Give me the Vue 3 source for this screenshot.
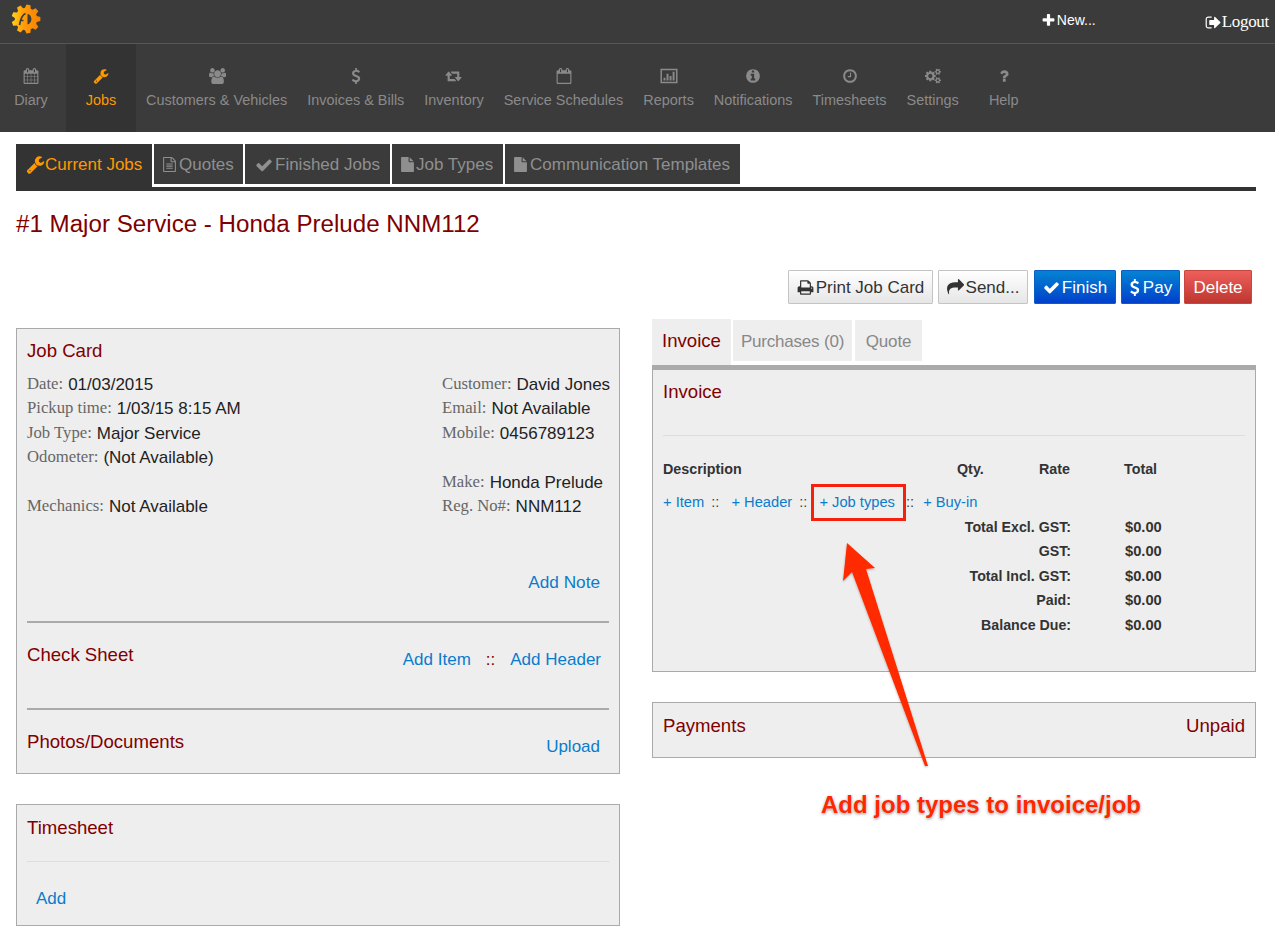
<script setup>
const icons = {
  calendar: 'M192 1664h288v-288h-288v288zm352 0h320v-288h-320v288zm-352-352h288v-320h-288v320zm352 0h320v-320h-320v320zm-352-384h288v-288h-288v288zm736 736h320v-288h-320v288zm-384-736h320v-288h-320v288zm768 736h288v-288h-288v288zm-384-352h320v-320h-320v320zm-352-864v-288q0-13-9.5-22.5t-22.5-9.5h-64q-13 0-22.5 9.5t-9.5 22.5v288q0 13 9.5 22.5t22.5 9.5h64q13 0 22.5-9.5t9.5-22.5zm736 864h288v-320h-288v320zm-384-384h320v-288h-320v288zm384 0h288v-288h-288v288zm32-480v-288q0-13-9.5-22.5t-22.5-9.5h-64q-13 0-22.5 9.5t-9.5 22.5v288q0 13 9.5 22.5t22.5 9.5h64q13 0 22.5-9.5t9.5-22.5zm384-64v1280q0 52-38 90t-90 38h-1408q-52 0-90-38t-38-90v-1280q0-52 38-90t90-38h128v-96q0-66 47-113t113-47h64q66 0 113 47t47 113v96h384v-96q0-66 47-113t113-47h64q66 0 113 47t47 113v96h128q52 0 90 38t38 90z',
  calendarO: 'M192 1664h1408v-1024h-1408v1024zm384-1216v-288q0-14-9-23t-23-9h-64q-14 0-23 9t-9 23v288q0 14 9 23t23 9h64q14 0 23-9t9-23zm768 0v-288q0-14-9-23t-23-9h-64q-14 0-23 9t-9 23v288q0 14 9 23t23 9h64q14 0 23-9t9-23zm384-64v1280q0 52-38 90t-90 38h-1408q-52 0-90-38t-38-90v-1280q0-52 38-90t90-38h128v-96q0-66 47-113t113-47h64q66 0 113 47t47 113v96h384v-96q0-66 47-113t113-47h64q66 0 113 47t47 113v96h128q52 0 90 38t38 90z',
  wrench: 'M448 1472q0-26-19-45t-45-19-45 19-19 45 19 45 45 19 45-19 19-45zm644-420l-682 682q-37 37-90 37-52 0-91-37l-106-108q-38-36-38-90 0-53 38-91l681-681q39 98 114.5 173.5t173.5 114.5zm634-435q0 39-23 106-47 134-164.5 217.5t-258.5 83.5q-185 0-316.5-131.5t-131.5-316.5 131.5-316.5 316.5-131.5q58 0 121.5 16.5t107.5 46.5q16 11 16 28t-16 28l-293 169v224l193 107q5-3 79-48.5t135.5-81 70.5-35.5q15 0 23.5 10t8.5 25z',
  users: 'M593 896q-162 5-265 128h-134q-82 0-138-40.5t-56-118.5q0-353 124-353 6 0 43.5 21t97.5 42.5 119 21.5q67 0 133-23-5 37-5 66 0 139 81 256zm1071 637q0 120-73 189.5t-194 69.5h-874q-121 0-194-69.5t-73-189.5q0-53 3.5-103.5t14-109 26.5-108.5 43-97.5 62-81 85.5-53.5 111.5-20q10 0 43 21.5t73 48 107 48 135 21.5 135-21.5 107-48 73-48 43-21.5q61 0 111.5 20t85.5 53.5 62 81 43 97.5 26.5 108.5 14 109 3.5 103.5zm-1024-1277q0 106-75 181t-181 75-181-75-75-181 75-181 181-75 181 75 75 181zm704 384q0 159-112.5 271.5t-271.5 112.5-271.5-112.5-112.5-271.5 112.5-271.5 271.5-112.5 271.5 112.5 112.5 271.5zm576 225q0 78-56 118.5t-138 40.5h-134q-103-123-265-128 81-117 81-256 0-29-5-66 66 23 133 23 59 0 119-21.5t97.5-42.5 43.5-21q124 0 124 353zm-128-609q0 106-75 181t-181 75-181-75-75-181 75-181 181-75 181 75 75 181z',
  dollar: 'M1362 1185q0 153-99.5 263.5t-258.5 136.5v175q0 14-9 23t-23 9h-135q-13 0-22.5-9.5t-9.5-22.5v-175q-66-9-127.5-31t-101.5-44.5-74-48-46.5-37.5-17.5-18q-17-21-2-41l103-135q7-10 23-12 15-2 24 9l2 2q113 99 243 125 37 8 74 8 81 0 142.5-43t61.5-122q0-28-15-53t-33.5-42-58.5-37.5-66-32-80-32.5q-39-16-61.5-25t-61.5-26.5-62.5-31-56.5-35.5-53.5-42.5-43.5-49-35.5-58-21-66.5-8.5-78q0-138 98-242t255-134v-180q0-13 9.5-22.5t22.5-9.5h135q14 0 23 9t9 23v176q57 6 110.5 23t87 33.5 63.5 37.5 39 29 15 14q17 18 5 38l-81 146q-8 15-23 16-14 3-27-7-3-3-14.5-12t-39-26.5-58.5-32-74.5-26-85.5-11.5q-95 0-155 43t-60 111q0 26 8.5 48t29.5 41.5 39.5 33 56 31 60.5 27 70 27.5q53 20 81 31.5t76 35 75.5 42.5 62 50 53 63.5 31.5 76.5 13 94z',
  retweet: 'M1216 1488q0 13-9.5 22.5t-22.5 9.5h-960q-8 0-13.5-2t-9-7-5.5-8-3-11.5-1-11.5v-600h-192q-26 0-45-19t-19-45q0-24 15-41l320-384q19-22 49-22t49 22l320 384q15 17 15 41 0 26-19 45t-45 19h-192v384h576q16 0 25 11l160 192q7 11 7 21zm640-416q0 24-15 41l-320 384q-20 23-49 23t-49-23l-320-384q-15-17-15-41 0-26 19-45t45-19h192v-384h-576q-16 0-25-12l-160-192q-7-9-7-20 0-13 9.5-22.5t22.5-9.5h960q8 0 13.5 2t9 7 5.5 8 3 11.5 1 11.5v600h192q26 0 45 19t19 45z',
  chart: 'M-60 96H1852V1696H-60zM110 256V1536H1682V256zM280 1088H500V1400H280zM620 640H840V1400H620zM960 896H1180V1400H960zM1300 420H1520V1400H1300z',
  info: 'M1152 1376v-160q0-14-9-23t-23-9h-96v-512q0-14-9-23t-23-9h-320q-14 0-23 9t-9 23v160q0 14 9 23t23 9h96v320h-96q-14 0-23 9t-9 23v160q0 14 9 23t23 9h448q14 0 23-9t9-23zm-128-896v-160q0-14-9-23t-23-9h-192q-14 0-23 9t-9 23v160q0 14 9 23t23 9h192q14 0 23-9t9-23zm640 416q0 209-103 385.5t-279.5 279.5-385.5 103-385.5-103-279.5-279.5-103-385.5 103-385.5 279.5-279.5 385.5-103 385.5 103 279.5 279.5 103 385.5z',
  clock: 'M1024 544v448q0 14-9 23t-23 9h-320q-14 0-23-9t-9-23v-64q0-14 9-23t23-9h224v-352q0-14 9-23t23-9h64q14 0 23 9t9 23zm416 352q0-148-73-273t-198-198-273-73-273 73-198 198-73 273 73 273 198 198 273 73 273-73 198-198 73-273zm224 0q0 209-103 385.5t-279.5 279.5-385.5 103-385.5-103-279.5-279.5-103-385.5 103-385.5 279.5-279.5 385.5-103 385.5 103 279.5 279.5 103 385.5z',
  cogs: 'M896 896q0-106-75-181t-181-75-181 75-75 181 75 181 181 75 181-75 75-181zm768 512q0-52-38-90t-90-38-90 38-38 90q0 53 37.5 90.5t90.5 37.5 90.5-37.5 37.5-90.5zm0-1024q0-52-38-90t-90-38-90 38-38 90q0 53 37.5 90.5t90.5 37.5 90.5-37.5 37.5-90.5zm-384 421v185q0 10-7 19.5t-16 10.5l-155 24q-11 35-32 76 34 48 90 115 7 11 7 20 0 12-7 19-23 30-82.5 89.5t-78.5 59.5q-11 0-21-7l-115-90q-37 19-77 31-11 108-23 155-7 24-30 24h-186q-11 0-20-7.5t-10-17.5l-23-153q-34-10-75-31l-118 89q-7 7-20 7-11 0-21-8-144-133-144-160 0-9 7-19 10-14 41-53t47-61q-23-44-35-82l-152-24q-10-1-17-9.5t-7-19.5v-185q0-10 7-19.5t16-10.5l155-24q11-35 32-76-34-48-90-115-7-11-7-20 0-12 7-20 22-30 82-89t79-59q11 0 21 7l115 90q34-18 77-32 11-108 23-154 7-24 30-24h186q11 0 20 7.5t10 17.5l23 153q34 10 75 31l118-89q8-7 20-7 11 0 21 8 144 133 144 160 0 8-7 19-12 16-42 54t-45 60q23 48 34 82l152 23q10 2 17 10.5t7 19.5zm640 533v140q0 16-149 31-12 27-30 52 51 113 51 138 0 4-4 7-122 71-124 71-8 0-46-47t-52-68q-20 2-30 2t-30-2q-14 21-52 68t-46 47q-2 0-124-71-4-3-4-7 0-25 51-138-18-25-30-52-149-15-149-31v-140q0-16 149-31 13-29 30-52-51-113-51-138 0-4 4-7 4-2 35-20t59-34 30-16q8 0 46 46.5t52 67.5q20-2 30-2t30 2q51-71 92-112l6-2q4 0 124 70 4 3 4 7 0 25-51 138 17 23 30 52 149 15 149 31zm0-1024v140q0 16-149 31-12 27-30 52 51 113 51 138 0 4-4 7-122 71-124 71-8 0-46-47t-52-68q-20 2-30 2t-30-2q-14 21-52 68t-46 47q-2 0-124-71-4-3-4-7 0-25 51-138-18-25-30-52-149-15-149-31v-140q0-16 149-31 13-29 30-52-51-113-51-138 0-4 4-7 4-2 35-20t59-34 30-16q8 0 46 46.5t52 67.5q20-2 30-2t30 2q51-71 92-112l6-2q4 0 124 70 4 3 4 7 0 25-51 138 17 23 30 52 149 15 149 31z',
  question: 'M1088 1256v240q0 16-12 28t-28 12h-240q-16 0-28-12t-12-28v-240q0-16 12-28t28-12h240q16 0 28 12t12 28zm316-600q0 54-15.5 101t-35 76.5-55 59.5-57.5 43.5-61 35.5q-41 23-68.5 65t-27.5 67q0 17-12 32.5t-28 15.5h-240q-15 0-25.5-18.5t-10.5-37.5v-45q0-83 65-156.5t143-108.5q59-27 84-56t25-76q0-42-46.5-74t-107.5-32q-65 0-108 29-35 25-107 115-13 16-31 16-12 0-25-8l-164-125q-13-10-15.5-25t5.5-28q160-266 464-266 80 0 161 31t146 83 106 127.5 41 158.5z',
  fileText: 'M1596 380q28 28 48 76t20 88v1152q0 40-28 68t-68 28h-1344q-40 0-68-28t-28-68v-1600q0-40 28-68t68-28h896q40 0 88 20t76 48zm-444-244v376h376q-10-29-22-41l-313-313q-12-12-41-22zm384 1528v-1024h-416q-40 0-68-28t-28-68v-416h-768v1536h1280zm-1024-864q0-14 9-23t23-9h704q14 0 23 9t9 23v64q0 14-9 23t-23 9h-704q-14 0-23-9t-9-23v-64zm736 224q14 0 23 9t9 23v64q0 14-9 23t-23 9h-704q-14 0-23-9t-9-23v-64q0-14 9-23t23-9h704zm0 256q14 0 23 9t9 23v64q0 14-9 23t-23 9h-704q-14 0-23-9t-9-23v-64q0-14 9-23t23-9h704z',
  file: 'M1152 512v-472q22 14 36 28l408 408q14 14 28 36h-472zm-128 32q0 40 28 68t68 28h544v1056q0 40-28 68t-68 28h-1344q-40 0-68-28t-28-68v-1600q0-40 28-68t68-28h800v544z',
  check: 'M1671 566q0 40-28 68l-724 724-136 136q-28 28-68 28t-68-28l-136-136-362-362q-28-28-28-68t28-68l136-136q28-28 68-28t68 28l294 295 656-657q28-28 68-28t68 28l136 136q28 28 28 68z',
  plus: 'M1600 736v192q0 40-28 68t-68 28h-416v416q0 40-28 68t-68 28h-192q-40 0-68-28t-28-68v-416h-416q-40 0-68-28t-28-68v-192q0-40 28-68t68-28h416v-416q0-40 28-68t68-28h192q40 0 68 28t28 68v416h416q40 0 68 28t28 68z',
  signOut: 'M704 1440q0 4 1 20t.5 26.5-3 23.5-10 19.5-20.5 6.5h-320q-119 0-203.5-84.5t-84.5-203.5v-704q0-119 84.5-203.5t203.5-84.5h320q13 0 22.5 9.5t9.5 22.5q0 4 1 20t.5 26.5-3 23.5-10 19.5-20.5 6.5h-320q-66 0-113 47t-47 113v704q0 66 47 113t113 47h312l11.5 1 11.5 3 8 5.5 7 9 2 13.5zm928-544q0 26-19 45l-544 544q-19 19-45 19t-45-19-19-45v-288h-448q-26 0-45-19t-19-45v-384q0-26 19-45t45-19h448v-288q0-26 19-45t45-19 45 19l544 544q19 19 19 45z',
  print: 'M448 1536h896v-256h-896v256zm0-640h896v-384h-160q-40 0-68-28t-28-68v-160h-640v640zm1152 64q0-26-19-45t-45-19-45 19-19 45 19 45 45 19 45-19 19-45zm128 0v416q0 13-9.5 22.5t-22.5 9.5h-224v160q0 40-28 68t-68 28h-960q-40 0-68-28t-28-68v-160h-224q-13 0-22.5-9.5t-9.5-22.5v-416q0-79 56.5-135.5t135.5-56.5h64v-544q0-40 28-68t68-28h672q40 0 88 20t76 48l152 152q28 28 48 76t20 88v256h64q79 0 135.5 56.5t56.5 135.5z',
  share: 'M1792 640q0 26-19 45l-512 512q-19 19-45 19t-45-19-19-45v-256h-224q-98 0-175.5 6t-154 21.5-133 42.5-105.5 69.5-79 95.5-48 118-18.5 152.5q0 55 5 123 0 6 2.5 23.5t2.5 26.5q0 15-8.5 25t-23.5 10q-16 0-28-17-7-9-13-22t-13.5-30-10.5-24q-127-285-127-451 0-199 53-333 162-403 875-403h224v-256q0-26 19-45t45-19 45 19l512 512q19 19 19 45z'
}

const navItems = [
  { label: 'Diary', icon: 'calendar' },
  { label: 'Jobs', icon: 'wrench', active: true },
  { label: 'Customers & Vehicles', icon: 'users' },
  { label: 'Invoices & Bills', icon: 'dollar' },
  { label: 'Inventory', icon: 'retweet' },
  { label: 'Service Schedules', icon: 'calendarO' },
  { label: 'Reports', icon: 'chart' },
  { label: 'Notifications', icon: 'info' },
  { label: 'Timesheets', icon: 'clock' },
  { label: 'Settings', icon: 'cogs' },
  { label: 'Help', icon: 'question' }
]

const subTabs = [
  { label: 'Current Jobs', icon: 'wrench', active: true },
  { label: 'Quotes', icon: 'fileText' },
  { label: 'Finished Jobs', icon: 'check' },
  { label: 'Job Types', icon: 'file' },
  { label: 'Communication Templates', icon: 'file' }
]

const jobLeft = [
  { label: 'Date:', value: '01/03/2015' },
  { label: 'Pickup time:', value: '1/03/15 8:15 AM' },
  { label: 'Job Type:', value: 'Major Service' },
  { label: 'Odometer:', value: '(Not Available)' },
  {},
  { label: 'Mechanics:', value: 'Not Available' }
]

const jobRight = [
  { label: 'Customer:', value: 'David Jones' },
  { label: 'Email:', value: 'Not Available' },
  { label: 'Mobile:', value: '0456789123' },
  {},
  { label: 'Make:', value: 'Honda Prelude' },
  { label: 'Reg. No#:', value: 'NNM112' }
]

const totals = [
  { label: 'Total Excl. GST:', value: '$0.00' },
  { label: 'GST:', value: '$0.00' },
  { label: 'Total Incl. GST:', value: '$0.00' },
  { label: 'Paid:', value: '$0.00' },
  { label: 'Balance Due:', value: '$0.00' }
]

// gear outline for the logo
const gearPath = (() => {
  const teeth = 9
  const pts = []
  for (let i = 0; i < teeth; i++) {
    const a = (i / teeth) * Math.PI * 2
    const step = (Math.PI * 2) / teeth
    const corners = [[11.2, -0.5], [14.5, -0.27], [14.5, 0.27], [11.2, 0.5]]
    corners.forEach(([r, f]) => {
      const t = a + f * step * 0.75
      pts.push(`${(15 + r * Math.cos(t)).toFixed(2)} ${(15 + r * Math.sin(t)).toFixed(2)}`)
    })
  }
  return 'M' + pts.join('L') + 'Z'
})()
</script>

<template>
  <div class="page">
    <header class="app-header">
      <div class="top-bar">
        <svg class="logo" viewBox="0 0 30 30">
          <defs>
            <linearGradient id="logoFill" x1="0" y1="0" x2="1" y2="0">
              <stop offset="0" stop-color="#ffd21a" />
              <stop offset="0.4" stop-color="#ff9d0a" />
              <stop offset="1" stop-color="#f77f00" />
            </linearGradient>
          </defs>
          <path :d="gearPath" fill="url(#logoFill)" />
          <path d="M14.5 9.5C11 11 9.5 15 8.5 21M9.5 16.5h3" fill="none" stroke="#3b3b3b" stroke-width="1.7" />
          <path d="M16.5 10c5 .5 5.5 9 0 10.5z" fill="#3b3b3b" />
        </svg>
        <a class="top-link new-link">
          <svg class="icon" viewBox="0 0 1792 1792"><path :d="icons.plus" /></svg>New...
        </a>
        <a class="top-link logout-link">
          <svg class="icon" viewBox="0 0 1792 1792"><path :d="icons.signOut" /></svg>Logout
        </a>
      </div>
      <nav class="main-nav">
        <a v-for="item in navItems" :key="item.label" class="nav-item" :class="{ active: item.active }">
          <svg class="icon" :viewBox="item.icon === 'retweet' || item.icon === 'cogs' ? '0 0 1920 1792' : '0 0 1792 1792'"><path :d="icons[item.icon]" /></svg>
          <span>{{ item.label }}</span>
        </a>
      </nav>
    </header>

    <main class="content">
      <div class="sub-tabs">
        <a v-for="tab in subTabs" :key="tab.label" class="sub-tab" :class="[{ active: tab.active }, tab.icon]">
          <svg class="icon" viewBox="0 0 1792 1792"><path :d="icons[tab.icon]" /></svg>{{ tab.label }}
        </a>
      </div>

      <h1 class="job-title">#1 Major Service - Honda Prelude NNM112</h1>

      <div class="job-actions">
        <button class="btn btn-print"><svg class="icon" viewBox="0 0 1792 1792"><path :d="icons.print" /></svg>Print Job Card</button>
        <button class="btn btn-send"><svg class="icon" viewBox="0 0 1792 1792"><path :d="icons.share" /></svg>Send...</button>
        <button class="btn btn-blue btn-finish"><svg class="icon" viewBox="0 0 1792 1792"><path :d="icons.check" /></svg>Finish</button>
        <button class="btn btn-blue btn-pay"><svg class="icon" viewBox="320 0 1100 1792"><path :d="icons.dollar" /></svg>Pay</button>
        <button class="btn btn-red">Delete</button>
      </div>

      <div class="columns">
        <div class="col-left">
          <section class="panel job-card">
            <h3 class="panel-title">Job Card</h3>
            <div class="job-info">
              <div class="info-col">
                <div v-for="(row, i) in jobLeft" :key="i" class="info-row">
                  <span class="info-label">{{ row.label }}</span>{{ row.value }}
                </div>
              </div>
              <div class="info-col">
                <div v-for="(row, i) in jobRight" :key="i" class="info-row">
                  <span class="info-label">{{ row.label }}</span>{{ row.value }}
                </div>
              </div>
            </div>
            <div class="add-note"><a class="link">Add Note</a></div>
            <div class="card-section check-sheet">
              <h3 class="panel-title">Check Sheet</h3>
              <div class="section-links">
                <a class="link">Add Item</a><span class="sep">::</span><a class="link">Add Header</a>
              </div>
            </div>
            <div class="card-section photos">
              <h3 class="panel-title">Photos/Documents</h3>
              <div class="section-links"><a class="link">Upload</a></div>
            </div>
          </section>

          <section class="panel timesheet">
            <h3 class="panel-title">Timesheet</h3>
            <div class="timesheet-add"><a class="link">Add</a></div>
          </section>
        </div>

        <div class="col-right">
          <div class="doc-tabs">
            <a class="doc-tab active">Invoice</a>
            <a class="doc-tab">Purchases (0)</a>
            <a class="doc-tab">Quote</a>
          </div>
          <section class="panel invoice">
            <h3 class="panel-title">Invoice</h3>
            <div class="line-head">
              <span class="col-desc">Description</span>
              <span class="col-qty">Qty.</span>
              <span class="col-rate">Rate</span>
              <span class="col-total">Total</span>
            </div>
            <div class="line-actions">
              <a class="link">+ Item</a><span class="dots d1">::</span>
              <a class="link">+ Header</a><span class="dots d2">::</span>
              <a class="link job-types">+ Job types<span class="callout-box"></span></a><span class="dots d3">::</span>
              <a class="link">+ Buy-in</a>
            </div>
            <div v-for="row in totals" :key="row.label" class="total-row">
              <span class="total-label">{{ row.label }}</span>
              <span class="total-value">{{ row.value }}</span>
            </div>
          </section>
          <section class="panel payments">
            <h3 class="panel-title">Payments</h3>
            <h3 class="panel-title">Unpaid</h3>
          </section>
        </div>
      </div>
    </main>

    <!-- screenshot annotation, lies over the page -->
    <svg class="callout-arrow" viewBox="0 0 100 240">
      <defs>
        <filter id="arrowShadow" x="-20%" y="-10%" width="140%" height="120%">
          <feDropShadow dx="0" dy="1" stdDeviation="1.2" flood-color="#000" flood-opacity="0.3" />
        </filter>
      </defs>
      <polygon points="7,3 35,28 26,29 88,226 85,226 12,32 3,41" fill="#ff2a00" filter="url(#arrowShadow)" />
    </svg>
    <div class="callout-text">Add job types to invoice/job</div>
  </div>
</template>

<style>
body {
  background: #fff;
}
</style>

<style scoped>
.page {
  position: relative;
  width: 1275px;
  height: 945px;
  overflow: hidden;
  font-family: "Liberation Sans", Arial, sans-serif;
  color: #222;
}

.icon {
  fill: currentColor;
  overflow: visible;
  flex: none;
}

/* Header */
.app-header {
  background: #3b3b3b;
  height: 132px;
}

.top-bar {
  display: flex;
  height: 43px;
  border-bottom: 1px solid #575757;
  position: relative;
  color: #fff;
}

.logo {
  width: 30px;
  height: 30px;
  margin: 4px 0 0 11px;
}

.top-link {
  display: flex;
  align-items: center;
  height: 40px;
}

.new-link {
  margin-left: auto;
  font-size: 14px;
}

.new-link .icon {
  width: 15px;
  height: 15px;
  margin-right: 1px;
}

.logout-link {
  margin: 2px 6px 0 109px;
  font-family: "Liberation Serif", serif;
  font-size: 17px;
  letter-spacing: -0.3px;
}

.logout-link .icon {
  width: 17px;
  height: 17px;
}

.main-nav {
  display: flex;
  height: 88px;
  margin-left: -4px;
}

.nav-item {
  display: flex;
  flex-direction: column;
  align-items: center;
  min-width: 70px;
  box-sizing: border-box;
  padding: 24px 10px 0;
  color: #8a8a8a;
  font-size: 14.45px;
  line-height: 17px;
  white-space: nowrap;
}

.nav-item .icon {
  width: 16px;
  height: 16px;
  margin-bottom: 8px;
}

.nav-item.active {
  background: #333;
  color: #f90;
}

/* Content */
.content {
  padding: 12px 19px 0 16px;
}

.sub-tabs {
  display: flex;
  align-items: flex-start;
  gap: 2px;
  height: 43px;
  border-bottom: 4px solid #333;
}

.sub-tab {
  display: flex;
  align-items: center;
  box-sizing: border-box;
  height: 40px;
  padding: 1px 0 0 8px;
  background: #3b3b3b;
  color: #8f8f8f;
  font-size: 17px;
  white-space: nowrap;
}

.sub-tab:nth-child(2) { width: 89px; }
.sub-tab:nth-child(3) { width: 145px; }
.sub-tab:nth-child(4) { width: 111px; }
.sub-tab:nth-child(5) { width: 235px; }

.sub-tab .icon {
  width: 15px;
  height: 15px;
  margin-right: 1px;
}

.sub-tab.fileText .icon {
  margin-right: 2px;
}

.sub-tab:nth-child(5) .icon {
  margin-right: 2px;
}

.sub-tab.check {
  padding-left: 10px;
}

.sub-tab.check .icon {
  width: 18px;
  height: 18px;
  margin-right: 2px;
}

.sub-tab.active {
  width: 136px;
  height: 47px;
  padding: 0 0 6px 10px;
  background: #333;
  color: #f90;
}

.sub-tab.active .icon {
  width: 19px;
  height: 19px;
  margin-right: 0;
}

.job-title {
  margin: 19px 0 0;
  font-size: 24.15px;
  line-height: 28px;
  font-weight: 400;
  color: #800000;
}

.job-actions {
  display: flex;
  justify-content: flex-end;
  gap: 5px;
  margin: 32px 4px 0 0;
}

.btn {
  display: flex;
  align-items: center;
  justify-content: center;
  height: 34px;
  padding: 1px 0 0;
  box-sizing: border-box;
  border: 1px solid #c4c4c4;
  border-radius: 1px;
  background: linear-gradient(#fff, #e6e6e6);
  color: #333;
  font: 17px "Liberation Sans", Arial, sans-serif;
}

.btn .icon {
  width: 17px;
  height: 17px;
  margin-right: 2px;
}

.btn-print { width: 145px; }
.btn-send { width: 90px; }
.btn-finish { width: 82px; margin-left: 1px; }
.btn-pay { width: 59px; }
.btn-red { width: 68px; margin-left: -1px; }

.btn-pay .icon {
  width: 11px;
  margin-right: 3px;
}

.btn-blue {
  border-color: #0a5fc4;
  background: linear-gradient(#0484d2, #0040cc);
  color: #fff;
}

.btn-red {
  border-color: #c8483f;
  background: linear-gradient(#ee5f5b, #bd362f);
  color: #fff;
}

.columns {
  display: grid;
  grid-template-columns: 604px 604px;
  column-gap: 32px;
  margin-top: 15px;
}

.col-left {
  padding-top: 9px;
}

.panel {
  box-sizing: border-box;
  background: #eee;
  border: 1px solid #aaa;
  padding: 0 10px;
}

.panel-title {
  margin: 0;
  font-size: 18.6px;
  line-height: 22px;
  font-weight: 400;
  color: #800000;
}

.link {
  color: #0a7ccc;
}

/* Job card */
.job-card {
  height: 446px;
  padding-top: 11px;
}

.job-info {
  display: flex;
  margin-top: 11px;
  font-size: 17px;
  line-height: 24.4px;
}

.info-col {
  flex: none;
  width: 415px;
}

.info-row {
  height: 24.4px;
  white-space: nowrap;
}

.info-label {
  margin-right: 5px;
  font-family: "Liberation Serif", serif;
  font-size: 16.7px;
  color: #666;
  position: relative;
  top: -1px;
}

.add-note {
  margin: 51px 9px 0 0;
  text-align: right;
  font-size: 17.2px;
  line-height: 24px;
}

.card-section {
  display: flex;
  justify-content: space-between;
  box-sizing: border-box;
  border-top: 2px solid #aaa;
}

.check-sheet {
  height: 87px;
  margin-top: 27px;
  padding-top: 21px;
}

.photos {
  height: 65px;
  padding-top: 21px;
}

.section-links {
  margin: 5px 8px 0 0;
  font-size: 17px;
  line-height: 22px;
}

.photos .section-links {
  margin-right: 9px;
}

.sep {
  margin: 0 15px;
  color: #800000;
}

.timesheet {
  height: 122px;
  margin-top: 30px;
  padding-top: 12px;
}

.timesheet .panel-title {
  padding-bottom: 22px;
  border-bottom: 1px solid #ddd;
}

.timesheet-add {
  margin: 25px 0 0 9px;
  font-size: 17px;
  line-height: 24px;
}

/* Invoice */
.doc-tabs {
  display: flex;
  align-items: flex-start;
  height: 46px;
}

.doc-tab {
  display: flex;
  align-items: center;
  justify-content: center;
  box-sizing: border-box;
  height: 41px;
  margin-top: 1px;
  padding-top: 2px;
  background: #eee;
  color: #888;
  font-size: 17px;
  letter-spacing: -0.2px;
}

.doc-tab:nth-child(1) {
  width: 79px;
  height: 46px;
  margin-top: 0;
  padding: 0 0 3px;
  color: #800000;
  font-size: 18.6px;
  letter-spacing: 0;
}

.doc-tab:nth-child(2) {
  width: 119px;
  margin-left: 2px;
}

.doc-tab:nth-child(3) {
  width: 67px;
  margin-left: 3px;
}

.invoice {
  height: 307px;
  border-top: 5px solid #aaa;
  padding-top: 11px;
}

.invoice .panel-title {
  padding-bottom: 32px;
  border-bottom: 1px solid #ddd;
}

.line-head {
  display: flex;
  margin: 23px 0 0;
  font-size: 14.3px;
  line-height: 20px;
  font-weight: 700;
  color: #333;
}

.col-desc { width: 294px; }
.col-qty { width: 82px; }
.col-rate { width: 85px; }

.line-actions {
  display: flex;
  margin-top: 13px;
  font-size: 14.7px;
  line-height: 20px;
  color: #444;
}

.dots {
  margin-left: 7px;
}

.d1 { margin-right: 12px; }
.d2 { margin-right: 12px; }
.d3 { margin-left: 11px; margin-right: 9px; }

.job-types {
  position: relative;
}

.callout-box {
  position: absolute;
  left: -8px;
  top: -8px;
  width: 95px;
  height: 37px;
  box-sizing: border-box;
  border: 3px solid #f5200d;
}

.total-row {
  display: flex;
  font-size: 14.2px;
  line-height: 24.5px;
  font-weight: 700;
  color: #333;
}

.line-actions + .total-row {
  margin-top: 2.6px;
}

.total-label {
  width: 408px;
  text-align: right;
}

.total-value {
  margin-left: 54px;
  font-size: 14.7px;
}

.payments {
  display: flex;
  justify-content: space-between;
  height: 56px;
  margin-top: 30px;
  padding-top: 12px;
}

/* Annotation */
.callout-arrow {
  position: absolute;
  left: 840px;
  top: 540px;
  width: 100px;
  height: 240px;
}

.callout-text {
  position: absolute;
  left: 821px;
  top: 791px;
  font-size: 24px;
  line-height: 28px;
  font-weight: 700;
  color: #ff2600;
  white-space: nowrap;
  text-shadow: 0 0 2px #fff, 0 1px 3px rgba(0, 0, 0, 0.5);
}
</style>
